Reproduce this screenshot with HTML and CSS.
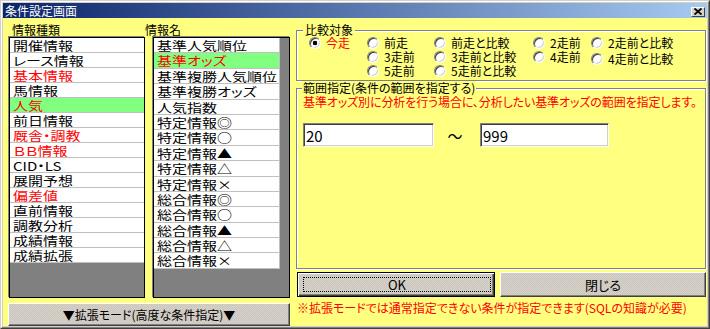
FILE: index.html
```html
<!DOCTYPE html>
<html lang="ja">
<head>
<meta charset="utf-8">
<title>条件設定画面</title>
<link rel="stylesheet" href="styles.css">
</head>
<body>
<div class="window">
  <div class="frame">
    <div class="titlebar">
      <span class="title">条件設定画面</span>
      <span class="close"><svg width="8" height="7" viewBox="0 0 8 7"><path d="M0.5 0.5 L7.5 6.5 M7.5 0.5 L0.5 6.5" stroke="#000" stroke-width="1.8" fill="none"/></svg></span>
    </div>
    <div class="client">
      <div class="left">
        <div class="lists">
          <div class="col col-kind">
            <div class="lbl">情報種類</div>
            <div class="listbox">
              <div class="items">
                <div class="item"><span>開催情報</span></div>
                <div class="item"><span>レース情報</span></div>
                <div class="item red"><span>基本情報</span></div>
                <div class="item"><span>馬情報</span></div>
                <div class="item sel red"><span>人気</span></div>
                <div class="item"><span>前日情報</span></div>
                <div class="item red"><span>厩舎・調教</span></div>
                <div class="item red"><span>ＢＢ情報</span></div>
                <div class="item"><span>CID・LS</span></div>
                <div class="item"><span>展開予想</span></div>
                <div class="item red"><span>偏差値</span></div>
                <div class="item"><span>直前情報</span></div>
                <div class="item"><span>調教分析</span></div>
                <div class="item"><span>成績情報</span></div>
                <div class="item"><span>成績拡張</span></div>
              </div>
            </div>
          </div>
          <div class="col col-name">
            <div class="lbl">情報名</div>
            <div class="listbox">
              <div class="items">
                <div class="item"><span>基準人気順位</span></div>
                <div class="item sel red"><span>基準オッズ</span></div>
                <div class="item"><span>基準複勝人気順位</span></div>
                <div class="item"><span>基準複勝オッズ</span></div>
                <div class="item"><span>人気指数</span></div>
                <div class="item"><span>特定情報◎</span></div>
                <div class="item"><span>特定情報○</span></div>
                <div class="item"><span>特定情報▲</span></div>
                <div class="item"><span>特定情報△</span></div>
                <div class="item"><span>特定情報×</span></div>
                <div class="item"><span>総合情報◎</span></div>
                <div class="item"><span>総合情報○</span></div>
                <div class="item"><span>総合情報▲</span></div>
                <div class="item"><span>総合情報△</span></div>
                <div class="item"><span>総合情報×</span></div>
              </div>
            </div>
          </div>
        </div>
        <div class="btn ext">▼拡張モード(高度な条件指定)▼</div>
      </div>
      <div class="right">
        <fieldset class="group cmp">
          <legend>比較対象</legend>
          <div class="radios">
            <label class="radio on red"><i></i>今走</label>
            <label class="radio"><i></i>前走</label>
            <label class="radio"><i></i>前走と比較</label>
            <label class="radio"><i></i>2走前</label>
            <label class="radio"><i></i>2走前と比較</label>
            <span></span>
            <label class="radio"><i></i>3走前</label>
            <label class="radio"><i></i>3走前と比較</label>
            <label class="radio"><i></i>4走前</label>
            <label class="radio low"><i></i>4走前と比較</label>
            <span></span>
            <label class="radio"><i></i>5走前</label>
            <label class="radio"><i></i>5走前と比較</label>
          </div>
        </fieldset>
        <fieldset class="group range">
          <legend>範囲指定(条件の範囲を指定する)</legend>
          <div class="range-body">
            <div class="hint">基準オッズ別に分析を行う場合に、分析したい基準オッズの範囲を指定します。</div>
            <div class="range-row">
              <input class="field from" type="text" value="20">
              <span class="tilde">～</span>
              <input class="field to" type="text" value="999">
            </div>
          </div>
        </fieldset>
        <div class="btns">
          <div class="btn ok"><span class="focus">OK</span></div>
          <div class="btn cancel">閉じる</div>
        </div>
        <div class="note">※拡張モードでは通常指定できない条件が指定できます(SQLの知識が必要)</div>
      </div>
    </div>
  </div>
</div>
</body>
</html>
```

FILE: styles.css
```css
* { box-sizing: border-box; }
html, body { margin: 0; padding: 0; }
body {
  width: 710px;
  height: 329px;
  overflow: hidden;
  background: #d4d0c8;
  font-family: "Noto Sans CJK JP", "Noto Sans", sans-serif;
  font-size: 12px;
  color: #000;
  font-feature-settings: "palt";
}
.window {
  width: 710px;
  height: 329px;
  border: 1px solid;
  border-color: #d4d0c8 #404040 #404040 #d4d0c8;
}
.frame {
  height: 100%;
  border: 1px solid;
  border-color: #fff #808080 #808080 #fff;
  padding: 1px;
  display: flex;
  flex-direction: column;
}
.titlebar {
  height: 15px;
  flex: none;
  background: linear-gradient(to right, #0a246a, #a6caf0);
  color: #fff;
  display: flex;
  align-items: center;
  justify-content: space-between;
  padding: 0 2px 0 2px;
  line-height: 15px;
}
.title { font-size: 12px; }
.close {
  width: 14px;
  height: 10px;
  margin-top: 2px;
  background: #d4d0c8;
  border: 1px solid;
  border-color: #fff #404040 #404040 #fff;
  display: flex;
  align-items: center;
  justify-content: center;
}
.close svg { display: block; }
.client {
  flex: 1;
  background: #ffff80;
  display: flex;
  padding-left: 5px;
}
.left {
  width: 282px;
  display: flex;
  flex-direction: column;
  padding-top: 4px;
}
.lists { display: flex; height: 276px; }
.col { display: flex; flex-direction: column; }
.col-kind { width: 137px; }
.col-name { width: 145px; }
.lbl { height: 15px; line-height: 15px; font-size: 12px; }
.col-kind .lbl { padding-left: 4px; }
.listbox {
  height: 261px;
  border: 1px solid #000;
  box-shadow: -1px -1px 0 #808080;
  background: #808080;
}
.col-kind .listbox { margin-left: 1px; width: 136px; }
.col-name .listbox { margin-left: 8px; width: 137px; }
.col-name .items { width: 126px; border-right: 1px solid #c0c0c0; }
.item {
  height: 15px;
  border-bottom: 1px solid #c0c0c0;
  background: #fff;
  padding-left: 3px;
  line-height: 15px;
  white-space: nowrap;
  overflow: hidden;
}
.col-name .item { height: 15.4px; }
.item span {
  display: inline-block;
  font-size: 12px;
  transform: scaleX(1.25);
  transform-origin: 0 50%;
}
.item.sel { background: #80ff80; }
.red { color: #ff0000; }

.btn {
  background: repeating-conic-gradient(#d6d2ca 0 25%, #cac6be 0 50%) 0 0 / 2px 2px;
  border: 1px solid;
  border-color: #fff #404040 #404040 #fff;
  box-shadow: inset -1px -1px #808080;
  display: flex;
  align-items: center;
  justify-content: center;
  color: #000;
}
.ext {
  margin-top: 5px;
  height: 23px;
  font-size: 12px;
}

.right {
  margin-left: 6px;
  width: 410px;
  display: flex;
  flex-direction: column;
  padding-top: 5px;
}
fieldset.group {
  margin: 0;
  min-width: 0;
  border: 1px solid #808080;
  box-shadow: inset 1px 1px #fff, 1px 1px #fff;
}
fieldset.group legend {
  background: #ffff80;
  font-size: 12px;
  line-height: 14px;
  height: 14px;
}
.cmp { height: 58px; padding: 0 0 0 6px; }
.cmp legend { padding: 0 2px; }
.radios {
  margin-left: 6px;
  margin-top: -1px;
  display: grid;
  grid-template-columns: 58px 67px 99px 58px 1fr;
  grid-auto-rows: 14px;
}
.radio {
  display: flex;
  align-items: center;
  gap: 5px;
  height: 14px;
  line-height: 14px;
  white-space: nowrap;
  font-size: 12px;
}
.radio.low { padding-top: 3px; }
.radio i {
  flex: none;
  width: 12px;
  height: 12px;
  border-radius: 50%;
  border: 1px solid;
  border-color: #808080 #fff #fff #808080;
  box-shadow: inset 1px 1px #404040, inset -1px -1px #d4d0c8;
  background: #fff;
}
.radio.on i {
  background: radial-gradient(circle, #000 0 2px, #fff 2.6px);
}
.range { height: 188px; padding: 0 6px 0 5px; }
.range legend { height: 13px; line-height: 13px; padding: 0 1px; }
.range-body { padding-left: 1px; }
.hint {
  color: #ff0000;
  line-height: 14px;
  white-space: nowrap;
  letter-spacing: -0.1px;
}
.range-row {
  margin-top: 14px;
  display: flex;
  align-items: center;
}
.field {
  height: 24px;
  margin: 0;
  padding: 0 0 0 2px;
  background: #fff;
  border: 1px solid;
  border-color: #808080 #fff #fff #808080;
  box-shadow: inset 1px 1px #404040, inset -1px -1px #d4d0c8;
  font-family: "Noto Sans CJK JP", "Noto Sans", sans-serif;
  font-size: 15px;
  color: #000;
  outline: none;
}
.from { width: 131px; }
.to { width: 129px; }
.tilde {
  width: 16px;
  margin: 0 17px 0 13px;
  font-size: 15px;
  text-align: center;
}
.btns {
  display: flex;
  gap: 5px;
  margin-top: 3px;
  padding-left: 1px;
  height: 25px;
}
.btns .btn { font-size: 13px; }
.ok {
  width: 198px;
  border: 1px solid #000;
  box-shadow: inset 1px 1px #fff, inset -1px -1px #404040, inset -2px -2px #808080;
  padding: 4px 3px 4px 5px;
}
.ok .focus {
  flex: 1;
  align-self: stretch;
  border: 1px dotted #000;
  display: flex;
  align-items: center;
  justify-content: center;
}
.cancel { flex: 1; }
.note {
  color: #ff0000;
  margin-top: 3px;
  line-height: 16px;
  padding-left: 1px;
  white-space: nowrap;
}
```
